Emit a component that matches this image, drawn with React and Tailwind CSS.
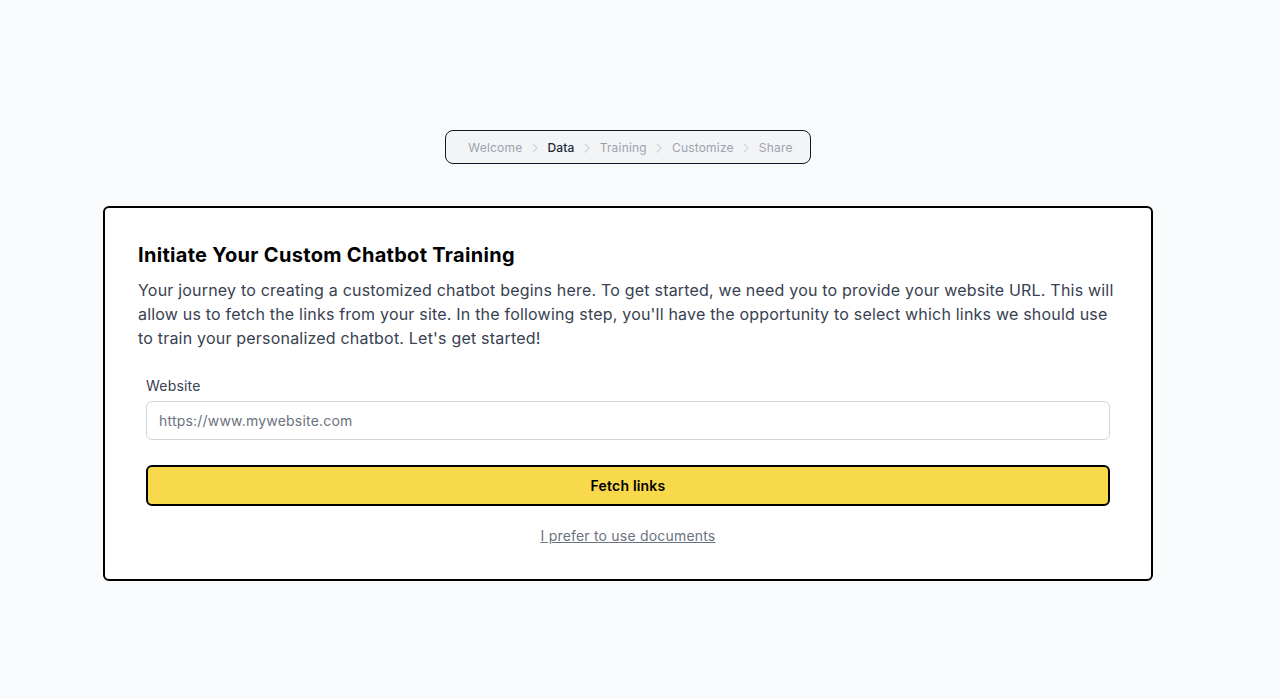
import React from "react";

function Chevron() {
  return (
    <svg width="8" height="12" viewBox="0 0 8 12" fill="none" stroke="#d1d5db" strokeWidth="1.2" strokeLinecap="round" strokeLinejoin="round" className="mt-[1px]">
      <path d="M2 2l4 4-4 4" />
    </svg>
  );
}

export default function App() {
  const steps = ["Welcome", "Data", "Training", "Customize", "Share"];
  return (
    <div className="min-h-[699px] bg-[#f9fafb] tracking-[0.2px]" style={{ fontFamily: "Inter, 'Noto Sans', sans-serif" }}>
      <div className="w-[1256px] flex flex-col items-center pt-[130px]">
        <div className="flex items-center h-[34px] pt-[1px] pl-[22px] pr-[17px] rounded-lg border-[1.5px] border-[#111827] bg-[#f3f4f6] gap-[8.5px] text-[12px]">
          {steps.map((s, i) => (
            <React.Fragment key={s}>
              {i > 0 && <Chevron />}
              <span className={s === "Data" ? "text-[#1f2937] font-medium" : "text-[#9ca3af]"}>{s}</span>
            </React.Fragment>
          ))}
        </div>
        <div className="mt-[42px] w-[1050px] bg-white border-2 border-black rounded-md px-[33px] pt-[33px] pb-[32px]">
          <h1 className="text-[20px] leading-[28px] font-bold text-black tracking-[0.3px]">Initiate Your Custom Chatbot Training</h1>
          <p className="mt-[9px] text-[16px] leading-[24px] text-[#374151]">
            Your journey to creating a customized chatbot begins here. To get started, we need you to provide your website URL. This will allow us to fetch the links from your site. In the following step, you'll have the opportunity to select which links we should use to train your personalized chatbot. Let's get started!
          </p>
          <div className="px-[8px] mt-[26px]">
            <label className="block text-[14px] leading-[20px] font-normal text-[#374151]">Website</label>
            <input
              type="text"
              placeholder="https://www.mywebsite.com"
              className="mt-[5px] w-full h-[39px] rounded-md border border-[#d1d5db] px-[12px] text-[14px] tracking-[0.2px] text-[#111827] placeholder:text-[#6b7280] outline-none bg-white"
            />
            <button className="mt-[25px] w-full h-[41px] rounded-md border-2 border-black bg-[#f8d94c] text-[14px] font-semibold text-black tracking-[0.2px]">
              Fetch links
            </button>
            <div className="mt-[17px] text-center">
              <a href="#" className="text-[14px] leading-[20px] text-[#6b7280] underline">I prefer to use documents</a>
            </div>
          </div>
        </div>
      </div>
    </div>
  );
}
